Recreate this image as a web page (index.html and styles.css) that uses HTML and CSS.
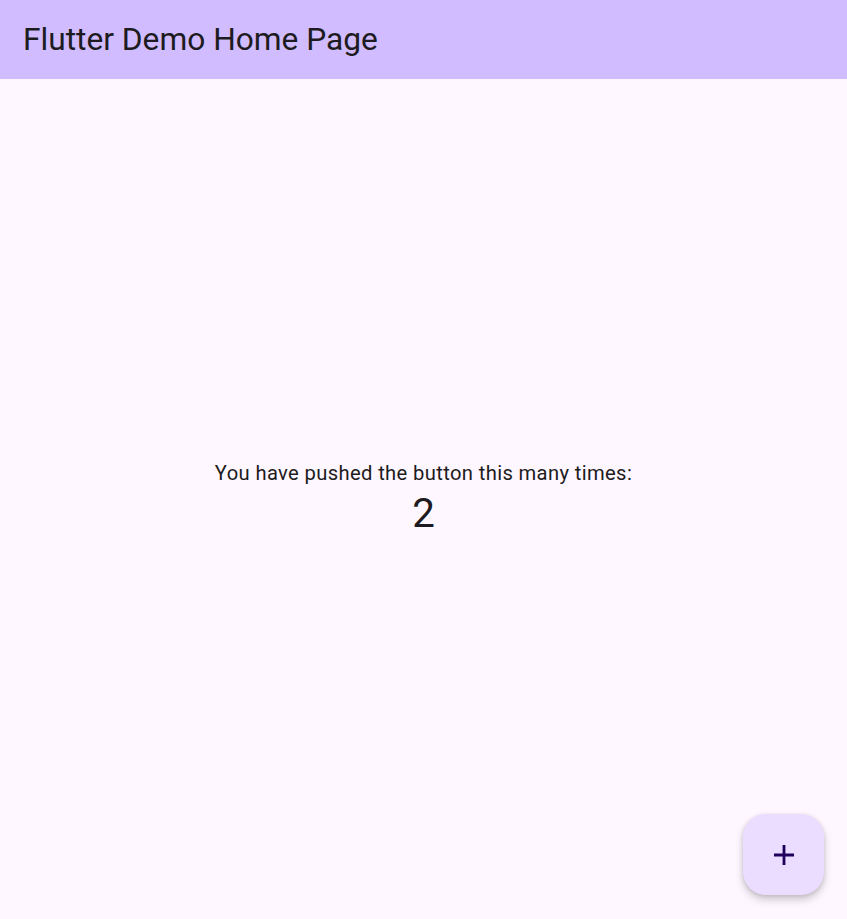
FILE: index.html
```html
<!DOCTYPE html>
<html>
<head>
<meta charset="utf-8">
<link rel="stylesheet" href="styles.css">
</head>
<body>
<div class="app">
  <header class="appbar"><h1 class="title">Flutter Demo Home Page</h1></header>
  <main class="content">
    <p class="label">You have pushed the button this many times:</p>
    <p class="counter">2</p>
  </main>
  <button class="fab" aria-label="Increment">
    <svg width="20" height="20" viewBox="0 0 20 20"><path d="M10 0v20M0 10h20" stroke="#21005d" stroke-width="2.8" fill="none"/></svg>
  </button>
</div>
</body>
</html>
```
FILE: styles.css
```css
html, body { margin: 0; padding: 0; }
body {
  font-family: Roboto, "Noto Sans", sans-serif;
  background: #fef7ff;
  color: #1d1b20;
}
.app {
  position: relative;
  height: 919px;
  display: flex;
  flex-direction: column;
  overflow: hidden;
}
.appbar {
  height: 79px;
  background: #d0bcff;
  display: flex;
  align-items: center;
  padding: 0 23px;
  flex-shrink: 0;
}
.title {
  margin: 0;
  font-size: 31.7px;
  font-weight: 400;
  line-height: 40px;
}
.content {
  flex: 1;
  display: flex;
  flex-direction: column;
  align-items: center;
  justify-content: center;
}
.label {
  margin: 0;
  font-size: 20.2px;
  letter-spacing: 0.36px;
  line-height: 28.8px;
}
.counter {
  margin: 0;
  font-size: 40.3px;
  line-height: 51.8px;
}
.fab {
  position: absolute;
  right: 23px;
  bottom: 24px;
  width: 81px;
  height: 81px;
  border: none;
  border-radius: 23px;
  background: #eaddff;
  display: flex;
  align-items: center;
  justify-content: center;
  box-shadow: 0 5px 8px rgba(0,0,0,0.18), 0 1px 4px rgba(0,0,0,0.12);
  padding: 0;
}
```
